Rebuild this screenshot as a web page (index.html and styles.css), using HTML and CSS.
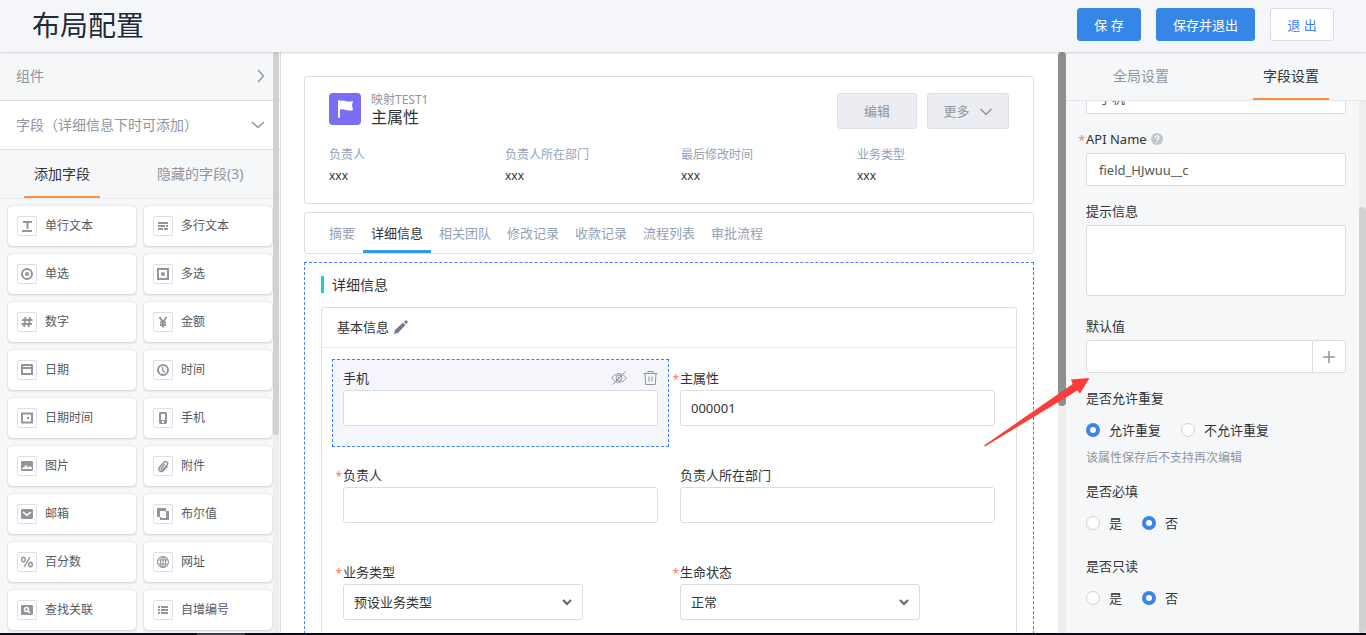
FILE: index.html
```html
<!DOCTYPE html>
<html lang="zh-CN">
<head>
<meta charset="utf-8">
<title>布局配置</title>
<link rel="stylesheet" href="styles.css">
</head>
<body>
<header class="topbar">
  <h1 class="topbar-title">布局配置</h1>
  <div class="topbar-actions">
    <button class="btn btn-primary">保 存</button>
    <button class="btn btn-primary">保存并退出</button>
    <button class="btn btn-plain">退 出</button>
  </div>
</header>

<div class="workspace">
  <aside class="palette">
    <button class="fold"><span>组件</span>
      <svg class="fold-icon" viewBox="0 0 14 14"><path d="M7 1l5.500 6L7 13"/></svg>
    </button>
    <button class="fold fold-open"><span>字段（详细信息下时可添加）</span>
      <svg class="fold-icon" viewBox="0 0 14 14"><path d="M1 4l6 5.500L13 4"/></svg>
    </button>
    <nav class="palette-tabs">
      <button class="tab tab-active">添加字段</button>
      <button class="tab">隐藏的字段(3)</button>
    </nav>
    <div class="field-grid">
      <button class="field-item"><svg class="field-icon" viewBox="0 0 20 20"><path d="M6 5h9v2h-3.500v6h-2V7H6zM5 14h10v2H5z"/></svg>单行文本</button>
      <button class="field-item"><svg class="field-icon" viewBox="0 0 20 20"><path d="M5 6h10v2H5zM5 9h7v2H5zM13 9h2v2h-2zM5 12h5v2H5zM11 12h4v2h-4z"/></svg>多行文本</button>
      <button class="field-item"><svg class="field-icon" viewBox="0 0 20 20"><circle class="line" cx="10" cy="10" r="5"/><circle cx="10" cy="10" r="2"/></svg>单选</button>
      <button class="field-item"><svg class="field-icon" viewBox="0 0 20 20"><path class="line" d="M5 5h10v10H5z"/><circle cx="10" cy="10" r="2"/></svg>多选</button>
      <button class="field-item"><svg class="field-icon" viewBox="0 0 20 20"><path class="line thin" d="M8.500 5L7 15M13 5l-1.500 10M5 8h10.500M4.500 12H15"/></svg>数字</button>
      <button class="field-item"><svg class="field-icon" viewBox="0 0 20 20"><path class="line thin" d="M6.500 5L10 10l3.500-5M10 10v5.500M7 10.500h6M7 13h6"/></svg>金额</button>
      <button class="field-item"><svg class="field-icon" viewBox="0 0 20 20"><path fill-rule="evenodd" d="M5 4h10l1 1v10H4V5zM6 6v1h8V6zM6 9v4h8V9z"/></svg>日期</button>
      <button class="field-item"><svg class="field-icon" viewBox="0 0 20 20"><circle class="line" cx="10" cy="10" r="5"/><path class="line clip" d="M9.500 7v3.500l2.500 2"/></svg>时间</button>
      <button class="field-item"><svg class="field-icon" viewBox="0 0 20 20"><path class="line" d="M5 5.500h10v9H5z"/><path d="M10 9h2v2h-2z"/></svg>日期时间</button>
      <button class="field-item"><svg class="field-icon" viewBox="0 0 20 20"><path fill-rule="evenodd" d="M7 4h6l1 1v10l-1 1H7l-1-1V5zM8 6v6h4V6zM9 13v2h2v-2z"/></svg>手机</button>
      <button class="field-item"><svg class="field-icon" viewBox="0 0 20 20"><path fill-rule="evenodd" d="M4 6l1-1h10l1 1v8l-1 1H5l-1-1zM5 13h10v-1l-2-2-1.500 1.500L9 9l-2.500 2.500L5 12z"/></svg>图片</button>
      <button class="field-item"><svg class="field-icon" viewBox="0 0 20 20"><path class="line clip" d="M14.500 10l-4 4.500c-2.500 2.500-6-.5-4-3.200l4.500-5c2-2 4.800.2 3.300 2.500l-4.300 4.700c-1.200 1-2.500-.3-1.600-1.500l3.300-3.800"/></svg>附件</button>
      <button class="field-item"><svg class="field-icon" viewBox="0 0 20 20"><path d="M4 6l1-1h10l1 1v8l-1 1H5l-1-1z"/><path class="line cut" d="M6 8l4 3.200L14 8"/></svg>邮箱</button>
      <button class="field-item"><svg class="field-icon" viewBox="0 0 20 20"><path fill-rule="evenodd" d="M4 4h9v3h3v9H7v-3H4zM7 7v6h1l1 1h4V8l-1-1z"/></svg>布尔值</button>
      <button class="field-item"><svg class="field-icon" viewBox="0 0 20 20"><path class="line clip" d="M13 5L7 15"/><ellipse class="line clip" cx="6.500" cy="7.500" rx="1.800" ry="2.300"/><ellipse class="line clip" cx="13.500" cy="12.500" rx="1.800" ry="2.300"/></svg>百分数</button>
      <button class="field-item"><svg class="field-icon" viewBox="0 0 20 20"><g class="line hair"><circle cx="10" cy="10" r="5.500"/><ellipse cx="10" cy="10" rx="2.600" ry="5.500"/><path d="M10 4.500v11M5 8h10M5 12h10"/></g></svg>网址</button>
      <button class="field-item"><svg class="field-icon" viewBox="0 0 20 20"><path d="M4 6l1-1h10l1 1v8l-1 1H5l-1-1z"/><g class="line cut"><circle cx="9.500" cy="9.500" r="2"/><path d="M11 11l2 2"/></g></svg>查找关联</button>
      <button class="field-item"><svg class="field-icon" viewBox="0 0 20 20"><path d="M5 6h2v2H5zM8 6h7v2H8zM5 9h2v2H5zM8 9h7v2H8zM5 12h2v2H5zM8 12h7v2H8z"/></svg>自增编号</button>
    </div>
    <div class="scroll palette-scroll"><div class="scroll-thumb"></div></div>
  </aside>

  <main class="canvas">
    <section class="panel record">
      <div class="record-head">
        <svg class="record-logo" viewBox="0 0 32 32"><rect width="32" height="32" rx="4"/><path class="flag" d="M9 8c0-1.300 2-1.300 2 0 4-2 6 2 13 0l-1 4.500 1 4.500c-5 2-8-1.500-13-.5V24c0 1.300-2 1.300-2 0z"/></svg>
        <div class="record-names">
          <div class="record-type">映射TEST1</div>
          <div class="record-name">主属性</div>
        </div>
        <button class="btn-gray">编辑</button>
        <button class="btn-gray btn-more">更多<svg class="more-icon" viewBox="0 0 14 14"><path d="M1.500 5L7 10.500 12.500 5"/></svg></button>
      </div>
      <dl class="facts">
        <div><dt>负责人</dt><dd>xxx</dd></div>
        <div><dt>负责人所在部门</dt><dd>xxx</dd></div>
        <div><dt>最后修改时间</dt><dd>xxx</dd></div>
        <div><dt>业务类型</dt><dd>xxx</dd></div>
      </dl>
    </section>

    <nav class="panel record-tabs">
      <button class="rtab">摘要</button>
      <button class="rtab rtab-active">详细信息</button>
      <button class="rtab">相关团队</button>
      <button class="rtab">修改记录</button>
      <button class="rtab">收款记录</button>
      <button class="rtab">流程列表</button>
      <button class="rtab">审批流程</button>
    </nav>

    <section class="detail">
      <h2 class="detail-title">详细信息</h2>
      <div class="group">
        <h3 class="group-title">基本信息
          <svg class="pencil" viewBox="0 0 14 14"><path d="M0 14l1-4 8-7.500L11.500 5 4 13zM10 1.800L12 0l2 2-1.800 2.200z"/></svg>
        </h3>
        <div class="form-grid">
          <div class="cell cell-selected">
            <div class="cell-head">
              <label for="f-phone">手机</label>
              <span class="cell-tools">
                <svg class="tool" viewBox="0 0 16 16"><path d="M.5 8Q4 3.500 8 3.500T15.500 8Q12 12.500 8 12.500T.5 8z"/><circle cx="8" cy="8" r="3"/><circle cx="8" cy="8" r="1"/><path d="M1.500 14.500l13-13"/></svg>
                <svg class="tool" viewBox="0 0 16 16"><path d="M1.500 3.500h14M6 3V1.500h5V3M3 4l.7 10.500h9.600L14 4M7 6.500v5M10 6.500v5"/></svg>
              </span>
            </div>
            <input class="text" id="f-phone" type="text">
          </div>
          <div class="cell">
            <div class="cell-head"><label class="required" for="f-main">主属性</label></div>
            <input class="text" id="f-main" type="text" value="000001">
          </div>
          <div class="cell">
            <div class="cell-head"><label class="required" for="f-owner">负责人</label></div>
            <input class="text" id="f-owner" type="text">
          </div>
          <div class="cell">
            <div class="cell-head"><label for="f-dept">负责人所在部门</label></div>
            <input class="text" id="f-dept" type="text">
          </div>
          <div class="cell">
            <div class="cell-head"><label class="required" for="f-biz">业务类型</label></div>
            <div class="select-wrap">
              <select class="text" id="f-biz"><option>预设业务类型</option></select>
              <svg class="select-icon" viewBox="0 0 10 10"><path d="M1 3l4 4 4-4"/></svg>
            </div>
          </div>
          <div class="cell">
            <div class="cell-head"><label class="required" for="f-life">生命状态</label></div>
            <div class="select-wrap">
              <select class="text" id="f-life"><option>正常</option></select>
              <svg class="select-icon" viewBox="0 0 10 10"><path d="M1 3l4 4 4-4"/></svg>
            </div>
          </div>
        </div>
      </div>
    </section>
  </main>
  <div class="scroll canvas-scroll"><div class="scroll-thumb"></div></div>

  <aside class="settings">
    <nav class="settings-tabs">
      <button class="tab">全局设置</button>
      <button class="tab tab-active">字段设置</button>
    </nav>
    <div class="settings-body">
      <div class="settings-form">
        <input class="text" type="text" value="手机" aria-label="字段名称">
        <div class="setting">
          <div class="setting-label"><label class="required" for="s-api">API Name</label>
            <svg class="help" viewBox="0 0 12 12"><circle cx="6" cy="6" r="6"/><path d="M4.200 4.800C4.200 2.200 8 2.400 7.800 4.600 7.700 5.800 6 5.800 6 7.400M6 8.400v1.300"/></svg>
          </div>
          <input class="text" id="s-api" type="text" value="field_HJwuu__c">
        </div>
        <div class="setting">
          <div class="setting-label"><label for="s-tip">提示信息</label></div>
          <textarea class="text area" id="s-tip"></textarea>
        </div>
        <div class="setting setting-default">
          <div class="setting-label"><label for="s-def">默认值</label></div>
          <div class="addon">
            <input class="text" id="s-def" type="text">
            <button class="addon-btn" aria-label="添加"><svg viewBox="0 0 12 12"><path d="M6 0v12M0 6h12"/></svg></button>
          </div>
        </div>
        <fieldset class="choice">
          <legend>是否允许重复</legend>
          <div class="radios">
            <label><input type="radio" name="dup" checked>允许重复</label>
            <label><input type="radio" name="dup">不允许重复</label>
          </div>
          <p class="hint">该属性保存后不支持再次编辑</p>
        </fieldset>
        <fieldset class="choice">
          <legend>是否必填</legend>
          <div class="radios">
            <label><input type="radio" name="req">是</label>
            <label><input type="radio" name="req" checked>否</label>
          </div>
        </fieldset>
        <fieldset class="choice">
          <legend>是否只读</legend>
          <div class="radios">
            <label><input type="radio" name="ro">是</label>
            <label><input type="radio" name="ro" checked>否</label>
          </div>
        </fieldset>
      </div>
      <div class="scroll settings-scroll"><div class="scroll-thumb"></div></div>
    </div>
    <svg class="arrow" viewBox="0 0 108 70"><path d="M2 67.500L90.700 6 89 1.500 107.500 0 98 15.500 95.300 12.500 3 68.500z"/></svg>
  </aside>
</div>
<footer class="taskbar"><div class="taskbar-item"></div></footer>
</body>
</html>
```
FILE: styles.css
```css
* {
  box-sizing: border-box;
}

body {
  margin: 0;
  height: 100vh;
  display: flex;
  flex-direction: column;
  overflow: hidden;
  background: #fff;
  color: #333;
  font: 13px/20px "Noto Sans", "Noto Sans CJK SC", sans-serif;
}

button,
input,
select,
textarea {
  font: inherit;
  color: inherit;
}

button {
  margin: 0;
  padding: 0;
  border: 0;
  background: none;
}

svg {
  display: block;
  flex: none;
}

.topbar {
  position: relative;
  z-index: 2;
  flex: none;
  display: flex;
  align-items: center;
  justify-content: space-between;
  height: 52px;
  padding: 0 32px;
  background: #f5f6fa;
  box-shadow: 0 1px 2px rgba(0, 0, 0, 0.15);
}

.topbar-title {
  margin: 0;
  padding-bottom: 2px;
  font-size: 28px;
  line-height: 48px;
  font-weight: 400;
  color: #212b36;
}

.topbar-actions {
  display: flex;
  gap: 15px;
  padding-bottom: 3px;
}

.btn {
  min-width: 64px;
  height: 33px;
  padding: 0 16px;
  border: 1px solid #3487e6;
  border-radius: 3px;
}

.btn-primary {
  background: #3487e6;
  color: #fff;
}

.btn-plain {
  background: #fff;
  border-color: #d9dce1;
  color: #407fff;
}

.workspace {
  flex: 1;
  min-height: 0;
  display: flex;
}

.scroll {
  background: #eee;
}

.scroll-thumb {
  border-radius: 4px;
}

/* Field palette */
.palette {
  position: relative;
  flex: none;
  width: 281px;
  overflow: hidden;
  background: #f5f7f9;
  border-right: 1px solid #dddfe6;
}

.fold {
  display: flex;
  align-items: center;
  justify-content: space-between;
  width: 100%;
  height: 49px;
  padding: 0 15px 0 16px;
  border-bottom: 1px solid #dddfe6;
  font-size: 14px;
  color: #91959e;
}

.fold-open {
  background: #fff;
}

.fold-icon,
.more-icon {
  width: 14px;
  height: 14px;
  fill: none;
  stroke: #91959e;
  stroke-width: 1.5;
}

.palette-tabs {
  display: flex;
  gap: 47px;
  height: 49px;
  padding-left: 24px;
  border-bottom: 1px solid #e9ebee;
}

.tab {
  padding: 2px 10px 0;
  border-bottom: 2px solid transparent;
  font-size: 14px;
  color: #91959e;
}

.tab-active {
  border-bottom-color: #ff8f3c;
  color: #333;
}

.field-grid {
  display: grid;
  grid-template-columns: 1fr 1fr;
  gap: 8px;
  padding: 7px 8px;
}

.field-item {
  display: flex;
  align-items: center;
  gap: 8px;
  height: 40px;
  padding-left: 9px;
  border-radius: 4px;
  background: #fff;
  box-shadow: 0 0 2px rgba(0, 0, 0, 0.16), 0 1px 2px rgba(0, 0, 0, 0.12);
  font-size: 12px;
  color: #545861;
}

.field-icon {
  width: 20px;
  height: 20px;
  border-radius: 2px;
  box-shadow: inset 0 0 0 1px #dddfe6;
  fill: #91959e;
}

.line {
  fill: none;
  stroke: #91959e;
  stroke-width: 2;
}

.thin {
  stroke-width: 1.9;
}

.clip {
  stroke-width: 1.4;
}

.hair {
  stroke-width: 1.1;
}

.cut {
  stroke: #fff;
  stroke-width: 1.5;
}

.palette-scroll {
  position: absolute;
  top: 0;
  right: 1px;
  bottom: 0;
  width: 6px;
}

.palette-scroll .scroll-thumb {
  height: 66%;
  background: #cfd2d1;
}

/* Layout canvas */
.canvas {
  flex: 1;
  min-width: 0;
  display: flex;
  flex-direction: column;
  gap: 8px;
  padding: 24px 24px 0 23px;
  overflow: hidden;
}

.canvas > * {
  flex: none;
}

.canvas-scroll {
  flex: none;
  width: 8px;
}

.canvas-scroll .scroll-thumb {
  height: 61%;
  background: #8f8f8f;
}

.panel {
  border: 1px solid #dddfe6;
  border-radius: 3px;
}

.record {
  padding: 16px 0 17px 24px;
}

.record-head {
  display: flex;
  gap: 10px;
  padding-right: 24px;
}

.record-logo {
  width: 32px;
  height: 32px;
  fill: #7b6ef6;
}

.flag {
  fill: #fff;
}

.record-names {
  flex: 1;
}

.record-type {
  font-size: 12px;
  line-height: 14px;
  color: #91959e;
}

.record-name {
  font-size: 16px;
  line-height: 20px;
}

.btn-gray {
  width: 80px;
  height: 36px;
  border: 1px solid #dddfe6;
  border-radius: 3px;
  background: #ecedf2;
  color: #91959e;
}

.btn-more {
  display: flex;
  align-items: center;
  justify-content: center;
  gap: 9px;
  width: 82px;
}

.facts {
  display: grid;
  grid-template-columns: repeat(4, 1fr);
  margin: 16px 0 0;
  font-size: 12px;
}

.facts dt {
  color: #93a1b8;
}

.facts dd {
  margin: 1px 0 0;
}

.record-tabs {
  display: flex;
  height: 42px;
  padding: 0 16px;
}

.rtab {
  padding: 3px 8px 0;
  border-bottom: 3px solid transparent;
  color: #93a1b8;
}

.rtab-active {
  border-bottom-color: #3399f3;
  color: #333;
}

.detail {
  padding: 13px 16px 40px;
  border: 1px dashed #407fff;
}

.detail-title {
  margin: 0 0 14px;
  padding-left: 8px;
  border-left: 3px solid #16cfd6;
  font-size: 14px;
  line-height: 17px;
  font-weight: 400;
}

.group {
  border: 1px solid #dddfe6;
  border-radius: 3px;
}

.group-title {
  display: flex;
  align-items: center;
  gap: 5px;
  height: 40px;
  margin: 0;
  padding: 0 15px 1px;
  border-bottom: 1px solid #e9ebee;
  font-size: 13px;
  font-weight: 400;
}

.pencil {
  width: 14px;
  height: 14px;
  fill: #737c8c;
}

.form-grid {
  display: grid;
  grid-template-columns: 1fr 1fr;
  row-gap: 9px;
  padding: 11px 10px;
}

.cell {
  height: 88px;
  padding: 8px 10px;
  border: 1px dashed transparent;
}

.cell-selected {
  border-color: #407fff;
  background: #f4f6fb;
}

.cell-head {
  display: flex;
  align-items: center;
  justify-content: space-between;
  height: 20px;
  margin-bottom: 2px;
}

.cell-tools {
  display: flex;
  gap: 15px;
}

.tool {
  width: 16px;
  height: 16px;
  fill: none;
  stroke: #91959e;
}

.required {
  position: relative;
}

.required::before {
  content: "*";
  position: absolute;
  top: 2px;
  right: 100%;
  padding-right: 1px;
  font-size: 12px;
  color: #ff7a66;
}

.text {
  display: block;
  width: 100%;
  height: 36px;
  padding: 0 10px;
  border: 1px solid #dcdddf;
  border-radius: 3px;
  background: #fff;
}

.select-wrap {
  position: relative;
  width: 240px;
}

.select-wrap .text {
  appearance: none;
}

.select-icon {
  position: absolute;
  top: 13px;
  right: 11px;
  width: 10px;
  height: 10px;
  fill: none;
  stroke: #666;
  stroke-width: 2;
}

/* Field settings */
.settings {
  position: relative;
  flex: none;
  display: flex;
  flex-direction: column;
  width: 300px;
  background: #f5f7f9;
}

.settings-tabs {
  flex: none;
  display: flex;
  justify-content: space-around;
  height: 49px;
  border-bottom: 1px solid #e3e5e9;
}

.settings-body {
  flex: 1;
  min-height: 0;
  display: flex;
  overflow: hidden;
}

.settings-form {
  flex: 1;
  margin-top: -20px;
  padding: 0 13px 0 20px;
}

.settings-form .text {
  height: 33px;
  padding: 0 12px;
  color: #545861;
}

.settings-form .area {
  height: 71px;
  resize: none;
}

.setting {
  margin-top: 15px;
}

.setting-label {
  display: flex;
  align-items: center;
  gap: 4px;
  margin-bottom: 4px;
}

.setting + .setting-default {
  margin-top: 20px;
}

.help {
  width: 12px;
  height: 12px;
  fill: #c1c5ce;
}

.help path {
  fill: none;
  stroke: #fff;
  stroke-width: 1.3;
}

.addon {
  display: flex;
}

.addon .text {
  border-radius: 3px 0 0 3px;
}

.addon-btn {
  flex: none;
  display: grid;
  place-items: center;
  width: 33px;
  border: 1px solid #dcdddf;
  border-left: 0;
  border-radius: 0 3px 3px 0;
  background: #fff;
}

.addon-btn svg {
  width: 12px;
  height: 12px;
  stroke: #91959e;
  stroke-width: 1.5;
}

.choice {
  margin: 15px 0 0;
  padding: 0;
  border: 0;
}

.choice + .choice {
  margin-top: 23px;
}

.choice legend {
  padding: 0;
}

.radios {
  display: flex;
  gap: 20px;
  margin-top: 12px;
}

.radios label {
  display: flex;
  align-items: center;
  gap: 9px;
}

.radios input {
  appearance: none;
  width: 14px;
  height: 14px;
  margin: 0;
  border: 1px solid #cfd2d6;
  border-radius: 50%;
  background: #fff;
}

.radios input:checked {
  border: 4px solid #3a84ea;
}

.hint {
  margin: 8px 0 -10px;
  font-size: 12px;
  color: #91959e;
}

.settings-scroll {
  flex: none;
  width: 7px;
  padding-top: 106px;
}

.settings-scroll .scroll-thumb {
  height: 100%;
  background: #cfd2d1;
}

.arrow {
  position: absolute;
  top: 326px;
  left: -84px;
  width: 108px;
  height: 70px;
  fill: #fc3c38;
  pointer-events: none;
}

.taskbar {
  flex: none;
  height: 2px;
  padding-left: 197px;
  background: #0a0a12;
}

.taskbar-item {
  width: 48px;
  height: 2px;
  background: #3d3d45;
}
```
